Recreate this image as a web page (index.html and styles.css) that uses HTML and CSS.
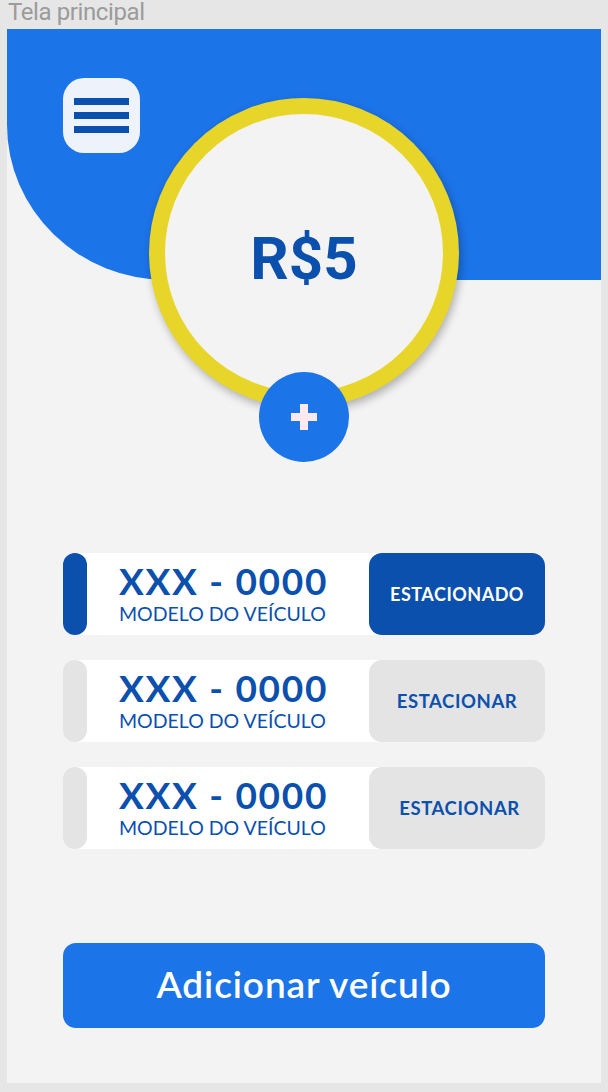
FILE: index.html
```html
<!DOCTYPE html>
<html lang="pt">
<head>
<meta charset="utf-8">
<title>Tela principal</title>
<link rel="stylesheet" href="styles.css">
</head>
<body>
<div class="screen-label">Tela principal</div>
<main class="frame">
  <header class="header">
    <button class="menu-btn" aria-label="Menu">
      <span class="bar"></span><span class="bar"></span><span class="bar"></span>
    </button>
  </header>
  <div class="balance">
    <div class="balance-ring"><span class="balance-value">R$5</span></div>
    <button class="add-credit" aria-label="Adicionar crédito">
      <svg width="26" height="26" viewBox="0 0 26 26"><rect x="9" y="0" width="8" height="26" fill="#fde9ee"/><rect x="0" y="9" width="26" height="8" fill="#fde9ee"/></svg>
    </button>
  </div>
  <section class="vehicles">
    <div class="card active">
      <span class="indicator"></span>
      <div class="info">
        <div class="plate">XXX - 0000</div>
        <div class="model">MODELO DO VEÍCULO</div>
      </div>
      <button class="park">ESTACIONADO</button>
    </div>
    <div class="card">
      <span class="indicator"></span>
      <div class="info">
        <div class="plate">XXX - 0000</div>
        <div class="model">MODELO DO VEÍCULO</div>
      </div>
      <button class="park">ESTACIONAR</button>
    </div>
    <div class="card">
      <span class="indicator"></span>
      <div class="info">
        <div class="plate">XXX - 0000</div>
        <div class="model">MODELO DO VEÍCULO</div>
      </div>
      <button class="park shift">ESTACIONAR</button>
    </div>
  </section>
  <button class="add-vehicle">Adicionar veículo</button>
</main>
</body>
</html>
```

FILE: styles.css
```css
* { box-sizing: border-box; }
html, body { margin: 0; padding: 0; }
body {
  background: #e6e6e6;
  width: 608px;
  height: 1092px;
  overflow: hidden;
  font-family: "Lato", "Noto Sans", sans-serif;
}
.screen-label {
  height: 29px;
  padding-left: 8px;
  font-family: Roboto, "Liberation Sans", sans-serif;
  font-size: 24px;
  line-height: 25px;
  color: #9b9b9b;
  letter-spacing: -0.4px;
}
.frame {
  position: relative;
  margin-left: 7px;
  width: 594px;
  height: 1054px;
  background: #f3f3f3;
  display: flex;
  flex-direction: column;
}
.header {
  height: 251px;
  background: #1c74e9;
  border-bottom-left-radius: 160px 155px;
  padding: 49px 0 0 56px;
  flex: none;
}
.menu-btn {
  width: 77px;
  height: 75px;
  border: none;
  border-radius: 21px;
  background: #eef3fb;
  display: flex;
  flex-direction: column;
  justify-content: center;
  align-items: center;
  gap: 7px;
  padding: 0;
}
.menu-btn .bar {
  display: block;
  width: 55px;
  height: 7px;
  background: #0c50ad;
}
.balance {
  position: absolute;
  left: 142px;
  top: 69px;
  width: 310px;
  height: 320px;
}
.balance-ring {
  width: 310px;
  height: 310px;
  border-radius: 50%;
  border: 16px solid #e8d52a;
  background: #f3f3f3;
  box-shadow: 2px 4px 8px rgba(0,0,0,0.28);
  display: flex;
  align-items: center;
  justify-content: center;
}
.balance-value {
  font-family: Roboto, "Liberation Sans", sans-serif;
  font-weight: 700;
  font-size: 60px;
  color: #0c50ad;
  margin-top: 10px;
}
.add-credit {
  position: absolute;
  left: 110px;
  top: 274px;
  width: 90px;
  height: 90px;
  border-radius: 50%;
  border: none;
  background: #1c74e9;
  display: flex;
  align-items: center;
  justify-content: center;
  padding: 0;
}
.vehicles {
  margin: 273px 56px 0 56px;
  display: flex;
  flex-direction: column;
  gap: 25px;
}
.card {
  height: 82px;
  display: flex;
  align-items: stretch;
  background: linear-gradient(to right, transparent 12px, #fff 12px, #fff calc(100% - 14px), transparent calc(100% - 14px));
}
.indicator {
  width: 24px;
  flex: none;
  border-radius: 12px;
  background: #e4e4e4;
}
.card.active .indicator { background: #0c50ad; }
.info {
  flex: 1;
  padding: 6px 0 0 32px;
  color: #0c50ad;
}
.plate {
  font-weight: 700;
  font-size: 37px;
  line-height: 44px;
  letter-spacing: 1.7px;
}
.model {
  font-size: 19.5px;
  line-height: 22px;
}
.park {
  width: 176px;
  flex: none;
  border: none;
  border-radius: 13px;
  background: #e4e4e4;
  color: #0c50ad;
  font-family: "Lato", "Noto Sans", sans-serif;
  font-weight: 700;
  font-size: 18.5px;
  letter-spacing: 0.6px;
  padding: 0;
}
.park.shift { padding-left: 5px; }
.card.active .park {
  background: #0c50ad;
  color: #fff;
  font-size: 18px;
  letter-spacing: 0.5px;
}
.add-vehicle {
  margin: 94px 56px 0 56px;
  height: 85px;
  border: none;
  border-radius: 13px;
  background: #1c74e9;
  color: #fff;
  font-family: "Lato", "Noto Sans", sans-serif;
  font-weight: 600;
  font-size: 37px;
  letter-spacing: 0.9px;
  padding: 0 0 4px 0;
}
```
